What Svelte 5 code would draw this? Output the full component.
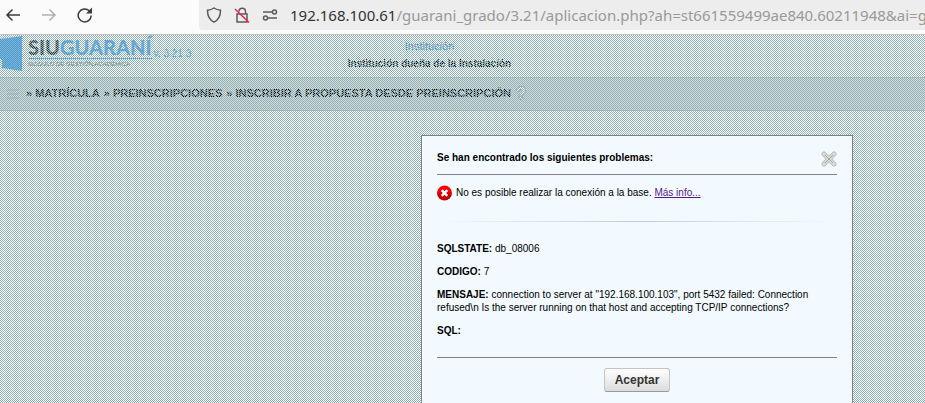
<script>
    const path = '/guarani_grado/3.21/aplicacion.php?ah=st661559499ae840.60211948&ai=gu';

    const crumbs = ['MATRÍCULA', 'PREINSCRIPCIONES', 'INSCRIBIR A PROPUESTA DESDE PREINSCRIPCIÓN'];

    const details = [
        { label: 'SQLSTATE:', value: 'db_08006' },
        { label: 'CODIGO:', value: '7' },
        {
            label: 'MENSAJE:',
            value: 'connection to server at "192.168.100.103", port 5432 failed: Connection refused\\n Is the server running on that host and accepting TCP/IP connections?'
        },
        { label: 'SQL:', value: '' }
    ];

    let open = $state(true);

    function close() {
        open = false;
    }
</script>

<div class="browser">
    <nav class="toolbar">
        <button class="nav" aria-label="Atrás">
            <svg width="16" height="16" viewBox="0 0 16 16"><path d="M15 8H2M7.5 2.5 2 8l5.5 5.5" /></svg>
        </button>
        <button class="nav forward" aria-label="Adelante" disabled>
            <svg width="16" height="16" viewBox="0 0 16 16"><path d="M1 8h13M8.5 2.5 14 8l-5.5 5.5" /></svg>
        </button>
        <button class="nav" aria-label="Recargar">
            <svg width="16" height="16" viewBox="0 0 16 16">
                <path d="M14.2 8.5A6.5 6.5 0 1 1 12.3 3.8" />
                <path class="solid" d="M15 .5v6H9z" />
            </svg>
        </button>
        <div class="url">
            <svg width="16" height="16" viewBox="0 0 16 16"><path d="M8 1c2 1.4 4 2 6.5 2.2C14.6 9 12.5 13 8 15.2 3.5 13 1.4 9 1.5 3.2 4 3 6 2.4 8 1z" /></svg>
            <svg width="16" height="16" viewBox="0 0 16 16">
                <path d="M5 4.5a3.2 3.2 0 0 1 6.5 0V7M3 7h10v8H3z" />
                <path class="slash" d="M1 2l14 13.5" />
            </svg>
            <svg width="16" height="16" viewBox="0 0 16 16">
                <path d="M1 5h9M6 11h9" />
                <circle cx="12.5" cy="5" r="2" /><circle cx="3.5" cy="11" r="2" />
            </svg>
            <span class="address"><b>192.168.100.61</b>{path}</span>
        </div>
    </nav>

    <main class="page">
        <header>
            <div class="brand">
                <svg class="mark" width="22" height="36" viewBox="0 0 22 36"><path d="M0 3 22 0v35L2 32V24L0 22z" /></svg>
                <div class="name">
                    <div class="logo"><span>SIU</span>GUARANÍ</div>
                    <div class="module">MÓDULO DE GESTIÓN ACADÉMICA</div>
                </div>
                <span class="version">v. 3.21.3</span>
            </div>
            <div class="institution">
                <span>Institución</span>
                <strong>Institución dueña de la Instalación</strong>
            </div>
        </header>
        <div class="crumbs">
            <svg width="12" height="12" viewBox="0 0 12 12"><path d="M0 2h12M0 6h12M0 10h12" /></svg>
            <div class="trail">
                {#each crumbs as crumb}
                    <span>» {crumb}</span>
                {/each}
            </div>
            <button class="help" aria-label="Ayuda">?</button>
        </div>

        {#if open}
            <div class="overlay">
                <div class="dialog" role="dialog" aria-labelledby="dialog-title">
                    <div class="title">
                        <h1 id="dialog-title">Se han encontrado los siguientes problemas:</h1>
                        <button class="close" aria-label="Cerrar" onclick={close}>
                            <svg width="16" height="16" viewBox="0 0 16 16">
                                <path class="outer" d="M3 3l10 10M13 3 3 13" />
                                <path class="mid" d="M3 3l10 10M13 3 3 13" />
                                <path class="inner" d="M4 4l8 8M12 4l-8 8" />
                            </svg>
                        </button>
                    </div>
                    <div class="problem">
                        <svg width="16" height="16" viewBox="0 0 16 16">
                            <defs>
                                <linearGradient id="red" x2="0" y2="1">
                                    <stop offset="0.4" stop-color="#f90505" />
                                    <stop offset="0.6" stop-color="#c50000" />
                                </linearGradient>
                            </defs>
                            <circle cx="7.5" cy="8" r="7.5" fill="url(#red)" />
                            <path d="M4.7 5.2l5.6 5.6M10.3 5.2l-5.6 5.6" />
                        </svg>
                        <span>No es posible realizar la conexión a la base. <a href="#info">Más info...</a></span>
                    </div>
                    <div class="divider"></div>
                    <div class="details" id="info">
                        {#each details as item}
                            <p><b>{item.label}</b> {item.value}</p>
                        {/each}
                    </div>
                    <div class="actions">
                        <button class="accept" onclick={close}>Aceptar</button>
                    </div>
                </div>
            </div>
        {/if}
    </main>
</div>

<style>
    :global(body) {
        margin: 0;
        overflow: hidden;
        font-family: "Liberation Sans", Arial, sans-serif;
        font-size: 10px;
        color: #000;
    }

    button {
        padding: 0;
        border: 0;
        background: none;
        font: inherit;
    }

    svg {
        display: block;
        flex: none;
        fill: none;
    }

    .browser {
        height: 100vh;
        display: flex;
        flex-direction: column;
    }

    .toolbar {
        display: flex;
        gap: 20px;
        padding-left: 5px;
        height: 35px;
        box-sizing: border-box;
        background: #fbfbfb;
        border-bottom: 1px solid #c3c1be;
    }

    .nav {
        height: 30px;
        stroke: #3b3b3b;
        stroke-width: 1.5;
    }

    .forward {
        stroke: #b0b0b0;
    }

    .solid {
        fill: #3b3b3b;
        stroke: none;
    }

    .url {
        flex: 1;
        min-width: 0;
        height: 30px;
        margin-left: 86px;
        padding-left: 7px;
        display: flex;
        align-items: center;
        gap: 12px;
        overflow: hidden;
        background: #ededed;
        border-radius: 0 0 0 4px;
        stroke: #5b5b5b;
        stroke-width: 1.5;
    }

    .slash {
        stroke: #f5204f;
    }

    .address {
        font: 15px/30px "Noto Sans", sans-serif;
        color: #999;
        white-space: nowrap;
    }

    .address b {
        font-weight: normal;
        color: #333;
    }

    .page {
        position: relative;
        flex: 1;
        background: #fff;
    }

    header {
        display: grid;
        grid-template-columns: 1fr auto 1fr;
        height: 42px;
        padding-right: 66px;
    }

    .brand {
        display: flex;
        align-items: flex-start;
        padding-top: 1px;
    }

    .mark {
        fill: #3d9bf0;
    }

    .name {
        margin-left: 6px;
        white-space: nowrap;
    }

    .logo {
        font: 900 20px/22px Lato, sans-serif;
        color: #3d9bf0;
        border-bottom: 1px solid #3d9bf0;
    }

    .logo span {
        color: #333;
    }

    .module {
        font: 6px/11px "Liberation Sans", Arial, sans-serif;
        color: #555;
    }

    .version {
        margin: 11px 0 0 2px;
        font-size: 10px;
        line-height: 13px;
        color: #3d9bf0;
        white-space: nowrap;
    }

    .institution {
        display: flex;
        flex-direction: column;
        align-items: center;
        padding-top: 3px;
        font-size: 10px;
        line-height: 17px;
    }

    .institution span {
        font-size: 11px;
        color: #1b7bd0;
    }

    .crumbs {
        display: flex;
        align-items: center;
        height: 32px;
        padding-left: 7px;
        background: #dadada;
        border-top: 1px solid #bbb;
        border-bottom: 1px solid #bbb;
        font-size: 11px;
        stroke: #aaa;
        white-space: nowrap;
    }

    .trail {
        display: flex;
        gap: 4px;
        margin: 0 5px 2px 7px;
        font-weight: bold;
    }

    .help {
        font-size: 16px;
        font-weight: bold;
        color: #fff;
        text-shadow: 1px 0 #999, -1px 0 #999, 0 1px #999, 0 -1px #999;
    }

    /* one-pixel checkerboard that dims the page */
    .overlay {
        position: absolute;
        inset: 0;
        display: flex;
        justify-content: flex-end;
        align-items: flex-start;
        padding: 100px 72px 0 0;
        background: repeating-conic-gradient(#8cb4b8 0 25%, transparent 0 50%) 0 0 / 2px 2px;
    }

    .dialog {
        width: 400px;
        padding: 0 15px 15px;
        background: #f2faff;
        border: 1px solid #7e8387;
    }

    .title {
        display: flex;
        justify-content: space-between;
        align-items: center;
        height: 38px;
        border-bottom: 1px solid #7e8387;
    }

    h1 {
        margin: 0;
        padding-top: 4px;
        font-size: 10px;
        line-height: 13px;
    }

    .close {
        padding-top: 8px;
    }

    .close path {
        stroke-linecap: round;
    }

    .outer {
        stroke: #bcc2c4;
        stroke-width: 5;
    }

    .mid {
        stroke: #deded9;
        stroke-width: 3;
    }

    .inner {
        stroke: #a2a5a5;
        stroke-width: 1;
    }

    .problem {
        display: flex;
        gap: 3px;
        padding-top: 10px;
        line-height: 16px;
    }

    .problem path {
        stroke: #fff;
        stroke-width: 2.5;
    }

    a {
        color: #551a8b;
    }

    .divider {
        height: 1px;
        margin: 20px 0;
        background: linear-gradient(90deg, transparent, #c5ccd3 50%, transparent);
    }

    .details {
        padding-bottom: 20px;
        border-bottom: 1px solid #7e8387;
    }

    .details p {
        margin: 0 0 10px;
        line-height: 13px;
    }

    .details p:last-child {
        margin: 0;
    }

    .actions {
        display: flex;
        justify-content: center;
        padding-top: 10px;
    }

    .accept {
        height: 24px;
        padding: 0 10px;
        border: 1px solid #c4c4c4;
        border-bottom-color: #999;
        border-radius: 3px;
        background: linear-gradient(#fff, #dcdcdc);
        font-size: 12px;
        font-weight: bold;
        color: #333;
    }
</style>
